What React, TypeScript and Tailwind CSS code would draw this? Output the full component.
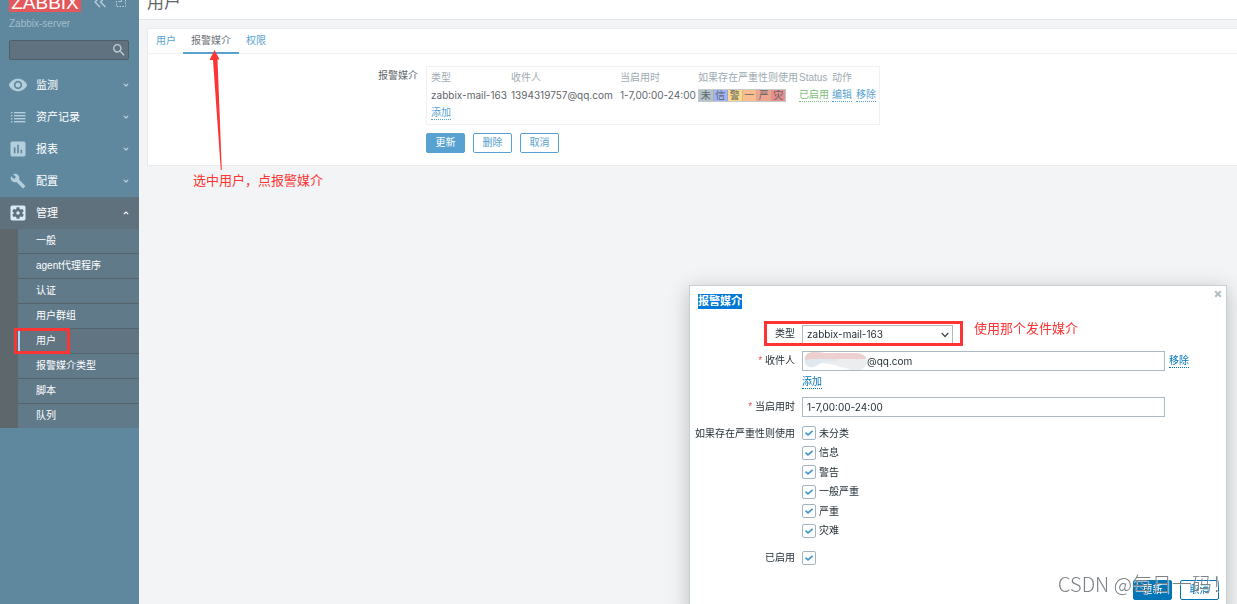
import React from "react";
import {
  MdAssessment,
  MdBuild,
  MdSearch,
  MdSettingsApplications,
  MdVisibility,
} from "react-icons/md";

const FONT =
  "font-['Liberation_Sans','Noto_Sans_CJK_SC',sans-serif] text-[10px] leading-4";

const latin = "font-['Inter','Liberation_Sans',sans-serif] text-[10px]";

function ListIcon() {
  return (
    <svg viewBox="0 0 18 18" className="size-[18px]" fill="currentColor" aria-hidden="true">
      {[4, 7, 10, 13].map((y) => (
        <g key={y}>
          <rect x="2" y={y} width="1.4" height="1.4" />
          <rect x="5" y={y} width="11.5" height="1.4" />
        </g>
      ))}
    </svg>
  );
}

function Chevron({ up = false }: { up?: boolean }) {
  return (
    <svg viewBox="0 0 6 4" className="h-1 w-1.5" fill="none" stroke="currentColor" strokeWidth="1.1" aria-hidden="true">
      <path d={up ? "M0.8 3.2 3 1 5.2 3.2" : "M0.8 0.8 3 3 5.2 0.8"} />
    </svg>
  );
}

const mainMenu = [
  { label: "监测", icon: <MdVisibility className="size-5" /> },
  { label: "资产记录", icon: <ListIcon /> },
  { label: "报表", icon: <MdAssessment className="size-5" /> },
  { label: "配置", icon: <MdBuild className="size-4" /> },
];

const subMenu = ["一般", "agent代理程序", "认证", "用户群组", "用户", "报警媒介类型", "脚本", "队列"];

function Sidebar() {
  return (
    <aside className="w-[139px] shrink-0 bg-[#5f889f] text-white">
      <div className="flex h-3 items-end overflow-hidden pl-[9px]">
        <a href="#home" className="flex h-6 w-[72px] shrink-0 items-end justify-center bg-[#e4585b] text-[19px] leading-[18px]">
          ZABBIX
        </a>
        <div className="mb-1 ml-3 flex items-end gap-2 text-[#b7ccd8]">
          <button type="button" aria-label="收起侧边栏">
            <svg viewBox="0 0 14 12" className="block h-3 w-3.5" fill="none" stroke="currentColor" strokeWidth="1.4">
              <path d="M7 1 2 6l5 5M12.5 1l-5 5 5 5" />
            </svg>
          </button>
          <button type="button" aria-label="隐藏侧边栏">
            <svg viewBox="0 0 12 12" className="block size-3" fill="none" stroke="currentColor">
              <path d="M1.5 1.5h9v9h-9z" strokeDasharray="1.6 1.2" />
              <path d="M3.500 5.500h3v-3" />
            </svg>
          </button>
        </div>
      </div>
      <div className="mt-1 pl-[9px] text-[#a3bdcb]">Zabbix-server</div>
      <form className="mx-[9px] mt-2 mr-2.5 flex h-5 items-center rounded-xs border border-[#515d67] bg-[#607280] pr-px">
        <input type="text" aria-label="搜索" className="h-4 min-w-0 flex-1 bg-transparent px-1 outline-none" />
        <button type="button" aria-label="搜索" className="text-[#bfcdd6]">
          <MdSearch className="size-4" />
        </button>
      </form>
      <nav className="mt-[9px]">
        <ul>
          {mainMenu.map((m) => (
            <li key={m.label}>
              <a href="#menu" className="flex h-8 items-center pr-2.5 text-[11px]">
                <span className="flex w-9 justify-center text-[#b5cedb]">{m.icon}</span>
                <span className="flex-1">{m.label}</span>
                <span className="text-[#c4d6e0]"><Chevron /></span>
              </a>
            </li>
          ))}
          <li>
            <a href="#menu" className="flex h-8 items-center bg-[#60717e] pr-2.5 text-[11px]">
              <span className="flex w-9 justify-center text-[#d9ebf5]">
                <MdSettingsApplications className="size-5" />
              </span>
              <span className="flex-1">管理</span>
              <Chevron up />
            </a>
            <ul className="border-l-18 border-[#5d676c] bg-[#617a8a]">
              {subMenu.map((label) => (
                <li key={label} className="relative h-[25px] border-b border-[#55636d] last:h-6 last:border-b-0">
                  <a
                    href="#sub"
                    className={
                      label === "用户"
                        ? "flex h-full items-center border-l-2 border-[#a5dbfa] bg-[#607482] pl-4"
                        : "flex h-full items-center pl-[18px]"
                    }
                  >
                    {label}
                  </a>
                  {label === "用户" && (
                    <span className="pointer-events-none absolute -top-px -left-1 h-[26px] w-14 border-3 border-[#fc3433]" />
                  )}
                </li>
              ))}
            </ul>
          </li>
        </ul>
      </nav>
    </aside>
  );
}

const severities = [
  { t: "未", c: "bg-[#b3c3ca]" },
  { t: "信", c: "bg-[#9fb4fc]" },
  { t: "警", c: "bg-[#fed98b]" },
  { t: "一", c: "bg-[#fdbd8e]" },
  { t: "严", c: "bg-[#f0a38f]" },
  { t: "灾", c: "bg-[#eb8d8c]" },
];

const dotted = "border-b border-dotted border-current leading-[13px] inline-block";

function MediaTable() {
  return (
    <div className="w-[454px] border border-[#eff1f2] pt-0.5 pb-0.5 pl-1">
      <table className="w-full table-fixed text-left">
        <colgroup>
          <col className="w-20" />
          <col className="w-[109px]" />
          <col className="w-[78px]" />
          <col className="w-[101px]" />
          <col className="w-[33px]" />
          <col />
        </colgroup>
        <thead className="text-[#9eaab3]">
          <tr className="h-[17px] whitespace-nowrap">
            {["类型", "收件人", "当启用时", "如果存在严重性则使用", "Status", "动作"].map((h) => (
              <th key={h} className="p-0 font-normal">{h}</th>
            ))}
          </tr>
        </thead>
        <tbody>
          <tr className="h-[18px] whitespace-nowrap">
            <td className={`p-0 ${latin}`}>zabbix-mail-163</td>
            <td className={`p-0 ${latin}`}>1394319757@qq.com</td>
            <td className={`p-0 ${latin}`}>1-7,00:00-24:00</td>
            <td className="p-0">
              <div className="flex w-[88px] border border-[#a0a5a8]/60">
                {severities.map((s) => (
                  <span
                    key={s.t}
                    className={`${s.c} flex-1 border-r border-[#8f8f8f]/40 text-center leading-[11px] last:border-r-0`}
                  >
                    {s.t}
                  </span>
                ))}
              </div>
            </td>
            <td className="p-0">
              <a href="#status" className={`${dotted} text-[#7dbc7d]`}>已启用</a>
            </td>
            <td className="p-0">
              <div className="flex gap-1 text-[#57a2d0]">
                <a href="#edit" className={dotted}>编辑</a>
                <a href="#remove" className={dotted}>移除</a>
              </div>
            </td>
          </tr>
          <tr className="h-[18px]">
            <td className="p-0">
              <a href="#add" className={`${dotted} text-[#57a2d0]`}>添加</a>
            </td>
          </tr>
        </tbody>
      </table>
    </div>
  );
}

const btn = "h-5 w-[39px] rounded-xs border leading-none";
const outlineBtn = `${btn} border-[#57a2d0] bg-white text-[#57a2d0]`;

function UserPanel() {
  return (
    <section className="ml-2 h-[138px] border border-r-0 border-[#e8eaec] bg-white">
      <div className="flex h-[25px] items-stretch border-b border-[#eff1f2] pl-px">
        <a href="#user" className="px-[7px] py-1 text-[#57a2d0]">用户</a>
        <a href="#media" className="h-[25px] border-b-2 border-[#57a2d0] px-2 py-1 text-[#6b7176]">报警媒介</a>
        <a href="#rights" className="px-[7px] py-1 text-[#57a2d0]">权限</a>
      </div>
      <div className="mt-3 flex gap-2">
        <div className="w-[270px] shrink-0 pt-0.5 text-right">报警媒介</div>
        <div>
          <MediaTable />
          <div className="mt-2 flex gap-2">
            <button type="button" className={`${btn} border-[#57a2d0] bg-[#57a2d0] text-white`}>更新</button>
            <button type="button" className={outlineBtn}>删除</button>
            <button type="button" className={outlineBtn}>取消</button>
          </div>
        </div>
      </div>
    </section>
  );
}

function Check({ id }: { id: string }) {
  return (
    <span className="grid size-3.5 place-items-center">
      <input
        id={id}
        type="checkbox"
        defaultChecked
        className="col-start-1 row-start-1 size-3.5 appearance-none rounded-xs border border-[#a4b4bf] bg-white"
      />
      <svg viewBox="0 0 10 10" className="pointer-events-none col-start-1 row-start-1 size-2.5" fill="none" stroke="#3f95cd" strokeWidth="1.6" aria-hidden="true">
        <path d="M1.500 4.700 4 6.900 8.600 2.900" />
      </svg>
    </span>
  );
}

const levels = ["未分类", "信息", "警告", "一般严重", "严重", "灾难"];
const field = `h-5 w-[363px] border border-[#acbbc2] bg-white pb-px text-[#1f2c33] outline-none ${latin}`;
const rowCls = "grid grid-cols-[100px_1fr] gap-x-[7px]";

function Required() {
  return <span className="text-[#e45959]">* </span>;
}

function MediaDialog() {
  return (
    <div
      role="dialog"
      aria-labelledby="dlg-title"
      className="fixed top-[285px] right-2.5 w-[538px] border border-[#c5d0d6] bg-white pb-4 pl-[5px] text-[#1f2c33] shadow-[0_4px_20px_rgba(0,0,0,0.22)]"
    >
      <div className="flex h-[39px] items-start justify-between pr-[3px] pl-[3px]">
        <h2 id="dlg-title" className="mt-2 bg-[#0078d7] text-[11px] leading-[15px] font-bold text-white">报警媒介</h2>
        <button type="button" aria-label="关闭" className="mt-[3px] p-px text-[#b5bfc5]">
          <svg viewBox="0 0 8 8" className="size-2" fill="none" stroke="currentColor" strokeWidth="2.2">
            <path d="M1.200 1.200 6.800 6.800M6.800 1.200 1.200 6.800" />
          </svg>
        </button>
      </div>

      <div className={`${rowCls} relative h-[26px]`}>
        <label htmlFor="type" className="text-right leading-[18px]">类型</label>
        <div className="grid h-[19px] w-[151px] items-center">
          <select id="type" className={`col-start-1 row-start-1 h-[19px] appearance-none border border-[#acbbc2] bg-white pb-0.5 pl-1 leading-4 outline-none ${latin}`}>
            <option>zabbix-mail-163</option>
          </select>
          <svg viewBox="0 0 8 6" className="pointer-events-none col-start-1 row-start-1 mr-1 h-1.5 w-2 justify-self-end" fill="none" stroke="#454c50" strokeWidth="1.3" aria-hidden="true">
            <path d="M0.700 1 4 4.500 7.300 1" />
          </svg>
        </div>
        <span className="pointer-events-none absolute -top-1 left-[69px] h-[25px] w-[199px] border-3 border-[#fc3433]" />
        <span className="absolute -top-1.5 left-[279px] text-[13px] leading-5 text-[#fc3433]">使用那个发件媒介</span>
      </div>

      <div className={rowCls}>
        <label htmlFor="sendto" className="text-right leading-5"><Required />收件人</label>
        <div>
          <div className="relative flex items-center gap-1">
            <input id="sendto" className={`${field} pl-16`} defaultValue="@qq.com" />
            <svg viewBox="0 0 64 18" className="pointer-events-none absolute top-px left-0.5 h-[18px] w-16" aria-hidden="true">
              <path d="M14 4H62Q65 14 57 18H46Q44 16 36 15Q27 11 14 11Z" fill="#ebedee" />
              <path d="M1 5H34V9Q20 9 15 12Q10 17 3 14Q0 12 1 5Z" fill="#e0e8ef" />
              <path d="M1 8Q0 1 8 0Q16 0 20 1H53Q61 2 62 7Q40 7 25 7Q10 6 1 8Z" fill="#edcfd0" />
            </svg>
            <a href="#remove" className={`${dotted} text-[#0275b8]`}>移除</a>
          </div>
          <div className="mt-[3px] h-[23px]">
            <a href="#add" className={`${dotted} text-[#0275b8]`}>添加</a>
          </div>
        </div>
      </div>

      <div className={`${rowCls} h-[29px]`}>
        <label htmlFor="active" className="text-right leading-5"><Required />当启用时</label>
        <input id="active" className={`${field} pl-1`} defaultValue="1-7,00:00-24:00" />
      </div>

      <div role="group" aria-labelledby="sev-label" className={rowCls}>
        <div id="sev-label" className="text-right leading-[15px] whitespace-nowrap">如果存在严重性则使用</div>
        <ul className="flex h-28 flex-col justify-between">
          {levels.map((l, i) => (
            <li key={l} className="flex h-3.5 items-center gap-[3px]">
              <Check id={`sev-${i}`} />
              <label htmlFor={`sev-${i}`} className="pt-px">{l}</label>
            </li>
          ))}
        </ul>
      </div>

      <div className={`${rowCls} mt-3 items-center`}>
        <label htmlFor="enabled" className="text-right">已启用</label>
        <Check id="enabled" />
      </div>

      <div className="mt-3.5 flex justify-end gap-2 pr-[7px]">
        <button type="button" className={`${btn} border-[#0275b8] bg-[#0275b8] text-white`}>更新</button>
        <button type="button" className={`${btn} border-[#0275b8] bg-white text-[#0275b8]`}>取消</button>
      </div>
    </div>
  );
}

export default function App() {
  return (
    <div className={`${FONT} flex min-h-screen bg-[#f2f4f5] text-[#5f666b]`}>
      <Sidebar />
      <div className="relative min-w-0 flex-1">
        <header className="flex h-5 items-end overflow-hidden border-b border-[#e3e6e8] bg-white pb-1.5 pl-2">
          <h1 className="text-[17px] leading-5">用户</h1>
        </header>
        <main className="pt-2">
          <UserPanel />
        </main>
        <svg viewBox="0 0 14 120" className="pointer-events-none absolute top-[50px] left-[70px] h-[120px] w-3.5" aria-hidden="true">
          <path d="M5.500 0 10.500 9.500 8.500 9.500 12.800 120 11.800 120 4 10 0.500 10Z" fill="#fc3433" />
        </svg>
        <p className="absolute top-[171px] left-[54px] text-[13px] leading-5 text-[#fc3433]">选中用户，点报警媒介</p>
      </div>
      <MediaDialog />
      <div className="pointer-events-none fixed right-0 bottom-1.5 w-[179px] overflow-hidden font-['Noto_Sans_CJK_SC',sans-serif] text-[20px] leading-7 font-light whitespace-nowrap text-[#7b8184] [text-shadow:1px_1px_0_rgba(255,255,255,0.6)]">
        CSDN @每日一码！
      </div>
    </div>
  );
}
